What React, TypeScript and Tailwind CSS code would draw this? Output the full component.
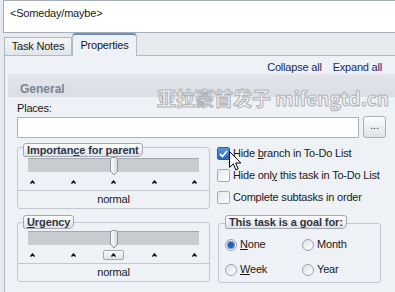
import React from "react";

function Tick() {
	return (
		<svg width="5" height="4" viewBox="0 0 5 4" className="block">
			<path d="M0.5 3.6 L2.5 1 L4.5 3.6" fill="none" stroke="#111" strokeWidth="1.4" />
		</svg>
	);
}

function Thumb() {
	return (
		<svg className="absolute left-[81px] -top-[2px]" width="10" height="19" viewBox="0 0 10 19">
			<defs>
				<linearGradient id="thumbFill" x1="0" x2="1" y1="0" y2="0">
					<stop offset="0" stopColor="#ffffff" />
					<stop offset="1" stopColor="#d5d9de" />
				</linearGradient>
			</defs>
			<path d="M1.5 2.5 Q1.5 0.5 3.5 0.5 H6.5 Q8.5 0.5 8.5 2.5 V14 L5 18 L1.5 14 Z" fill="url(#thumbFill)" stroke="#8c939c" />
		</svg>
	);
}

function Slider({ pad, focus }: { pad: string; focus?: boolean }) {
	return (
		<div className={`px-[10px] ${pad}`}>
			<div className="relative h-[14px] border-t border-[#a4a9b0] bg-[#c8ccd1]">
				<Thumb />
			</div>
			<div className="flex justify-between px-[2px] pt-[8px]">
				{[0, 1, 2, 3, 4].map((i) =>
					i === 2 && focus ? (
						<span key={i} className="-mx-[8px] -my-[3px] rounded-[2px] border border-[#a3a9b2] bg-gradient-to-b from-[#fbfbfc] to-[#dfe2e6] px-[7px] py-[2px]">
							<Tick />
						</span>
					) : (
						<Tick key={i} />
					)
				)}
			</div>
		</div>
	);
}

function Legend({ children, className }: { children: React.ReactNode; className: string }) {
	return (
		<div className={`absolute h-[14px] rounded-t-[3px] rounded-bl-[2px] rounded-br-[5px] border border-[#a3a9b3] bg-gradient-to-b from-[#ffffff] to-[#dde1e6] px-[3px] text-[11px] font-bold leading-[12px] tracking-[-0.1px] text-[#2e3642] ${className}`}>
			{children}
		</div>
	);
}

function Check({ checked }: { checked?: boolean }) {
	if (checked) {
		return (
			<span className="flex h-[13px] w-[13px] items-center justify-center rounded-[2px] border border-[#2f5f9e] bg-gradient-to-b from-[#5b93dc] to-[#2c66b8]">
				<svg width="9" height="8" viewBox="0 0 9 8">
					<path d="M1 4 L3.5 6.5 L8 1" fill="none" stroke="#fff" strokeWidth="1.8" />
				</svg>
			</span>
		);
	}
	return <span className="h-[13px] w-[13px] rounded-[2px] border border-[#a5adb8] bg-gradient-to-br from-[#e4e7eb] to-[#ffffff]" />;
}

function Radio({ checked }: { checked?: boolean }) {
	return (
		<span className="flex h-[12px] w-[12px] items-center justify-center rounded-full border border-[#9aa3ae] bg-gradient-to-br from-[#dde1e6] to-[#ffffff]">
			{checked && <span className="h-[6px] w-[6px] rounded-full bg-[#2d5fae] shadow-[0_0_0_1px_#6f9ad6]" />}
		</span>
	);
}

export default function App() {
	return (
		<div className="relative h-[292px] w-[395px] overflow-hidden bg-[#e7eaee] font-['Liberation_Sans',Arial,sans-serif] text-[11px] tracking-[-0.2px] text-[#1a1a1a]">
			{/* top text box */}
			<div className="ml-[3px] h-[33px] border-b border-l border-t border-[#a8aeb7] bg-white pl-[6px] pt-[4px] text-[11px]">
				&lt;Someday/maybe&gt;
			</div>

			{/* tabs */}
			<div className="flex h-[22px] items-end pl-[4px]">
				<div className="flex h-[18px] w-[68px] items-center justify-center border border-b-0 border-[#b3b9c1] bg-gradient-to-b from-[#f4f5f7] to-[#e2e5e9] text-[11px]">
					Task Notes
				</div>
				<div className="relative z-10 -mb-px flex h-[23px] w-[65px] items-start justify-center rounded-t-[4px] border border-b-0 border-t-2 border-[#b3b9c1] border-t-[#6d8fbb] bg-[#eef1f5] pt-[2px] text-[11px]">
					Properties
				</div>
			</div>

			{/* panel */}
			<div className="ml-[4px] h-[300px] border-l border-t border-[#b3b9c1] bg-[#eef1f5]">
				<div className="flex h-[18px] justify-end gap-[11px] pr-[13px] pt-[3px] text-[#1b2a66]">
					<span>Collapse all</span>
					<span>Expand all</span>
				</div>
				<div className="ml-[3px] h-[23px] border-t border-[#e4e8ed] bg-gradient-to-b from-[#e2e6eb] to-[#dadee5] pl-[12px] pt-[5px] text-[12px] font-bold tracking-normal text-[#7b8492]">
					General
				</div>

				<div className="pl-[12px] pr-[9px]">
					<div className="pt-[5px] leading-[13px]">Places:</div>
					<div className="mt-[1px] flex items-center gap-[4px]">
						<div className="h-[21px] flex-1 border border-[#abb2bc] bg-white" />
						<div className="flex h-[22px] w-[23px] items-center justify-center rounded-[3px] border border-[#a6adb7] bg-gradient-to-b from-[#fbfcfc] to-[#dfe3e8] pb-[3px] text-[11px] text-[#333]">
							...
						</div>
					</div>

					<div className="mt-[9px] flex gap-[7px]">
						{/* left column */}
						<div className="w-[193px]">
							<div className="relative flex h-[62px] flex-col rounded-[3px] border border-[#c3c8d0]">
								<Legend className="-top-[5px] left-[5px]">
									Importan<u>c</u>e for parent
								</Legend>
								<Slider pad="pt-[10px]" />
								<div className="mt-auto h-[18px] rounded-b-[3px] border-t border-[#c3c8d0] text-center leading-[17px]">normal</div>
							</div>

							<div className="relative mt-[13px] flex h-[60px] flex-col rounded-[3px] border border-[#c3c8d0]">
								<Legend className="-top-[8px] left-[5px]">
									<u>U</u>rgency
								</Legend>
								<Slider pad="pt-[8px]" focus />
								<div className="mt-auto h-[18px] rounded-b-[3px] border-t border-[#c3c8d0] text-center leading-[16px]">normal</div>
							</div>
						</div>

						{/* right column */}
						<div className="flex-1">
							<div className="flex flex-col gap-[9px]">
								<label className="flex h-[13px] items-center gap-[3px]">
									<Check checked />
									<span>
										Hide <u>b</u>ranch in To-Do List
									</span>
								</label>
								<label className="flex h-[13px] items-center gap-[3px]">
									<Check />
									<span>
										Hide onl<u>y</u> this task in To-Do List
									</span>
								</label>
								<label className="flex h-[13px] items-center gap-[3px]">
									<Check />
									<span>Complete subtasks in order</span>
								</label>
							</div>

							<div className="relative ml-[1px] mt-[19px] h-[60px] w-[163px] rounded-[3px] border border-[#c3c8d0]">
								<Legend className="-top-[9px] left-[6px]">
									This task is a <u>g</u>oal for:
								</Legend>
								<div className="grid grid-cols-[77px_1fr] gap-y-[12px] pl-[6px] pt-[14px]">
									<div className="flex h-[13px] items-center gap-[3px]">
										<Radio checked />
										<span>
											<u>N</u>one
										</span>
									</div>
									<div className="flex h-[13px] items-center gap-[3px]">
										<Radio />
										<span>Month</span>
									</div>
									<div className="flex h-[13px] items-center gap-[3px]">
										<Radio />
										<span>
											<u>W</u>eek
										</span>
									</div>
									<div className="flex h-[13px] items-center gap-[3px]">
										<Radio />
										<span>Year</span>
									</div>
								</div>
							</div>
						</div>
					</div>
				</div>
			</div>

			{/* watermark */}
			<div className="pointer-events-none absolute left-[157px] top-[84px] whitespace-nowrap text-[19px] font-bold tracking-[0px] text-[#f4f5f7] [-webkit-text-stroke:1px_#aeb2b8] font-['Noto_Sans_CJK_SC','Liberation_Sans',sans-serif]">
				亚拉豪首发子 mifengtd.cn
			</div>

			{/* mouse cursor */}
			<svg className="pointer-events-none absolute left-[229px] top-[151px]" width="13" height="21" viewBox="0 0 13 21">
				<path d="M0.5 0.5 V16.5 L4.3 12.8 L6.8 18.8 L9.2 17.8 L6.7 12 H11.8 Z" fill="#fff" stroke="#000" strokeWidth="1" strokeLinejoin="round" />
			</svg>
		</div>
	);
}
